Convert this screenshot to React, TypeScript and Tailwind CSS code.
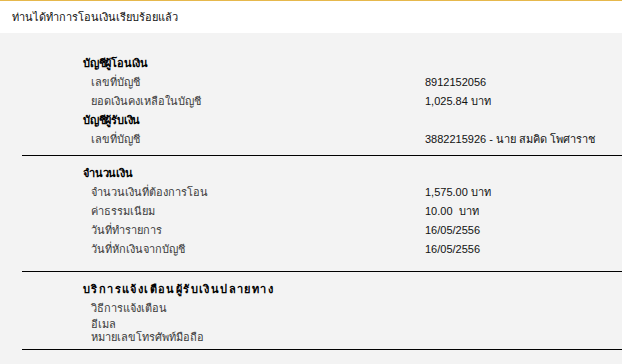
import React from "react";

const font = { fontFamily: '"Liberation Sans", "Noto Sans", Tahoma, sans-serif' };

function Row({ label, value }: { label: React.ReactNode; value?: React.ReactNode }) {
  return (
    <div className="grid grid-cols-[403px_1fr] h-[19px] leading-[19px]">
      <div className="pl-[69px] text-[#3a3a3a]">{label}</div>
      <div className="text-[#111]">{value}</div>
    </div>
  );
}

function Heading({ children, wide }: { children: React.ReactNode; wide?: boolean }) {
  return (
    <div
      className={
        wide
          ? "h-[19px] leading-[19px] pl-[61px] font-bold text-black tracking-[1.4px]"
          : "h-[19px] leading-[19px] pl-[61px] font-bold text-black tracking-[-0.2px]"
      }
    >
      {children}
    </div>
  );
}

export default function App() {
  return (
    <div className="w-[622px] h-[364px] bg-[#f3f3f3] text-[11px] overflow-hidden" style={font}>
      <div className="h-[33px] bg-white border-t border-[#e6b84c] flex items-center pl-[12px] text-[#111]">
        ท่านได้ทำการโอนเงินเรียบร้อยแล้ว
      </div>
      <div className="pl-[22px]">
        <div className="pt-[21px] pb-[6px] border-b border-black">
          <Heading>บัญชีผู้โอนเงิน</Heading>
          <Row label="เลขที่บัญชี" value="8912152056" />
          <Row label="ยอดเงินคงเหลือในบัญชี" value="1,025.84 บาท" />
          <Heading>บัญชีผู้รับเงิน</Heading>
          <Row label="เลขที่บัญชี" value="3882215926 - นาย สมคิด โพศาราช" />
        </div>
        <div className="pt-[8px] pb-[12px] border-b border-black">
          <Heading>จำนวนเงิน</Heading>
          <Row label="จำนวนเงินที่ต้องการโอน" value="1,575.00 บาท" />
          <Row label="ค่าธรรมเนียม" value={<span className="whitespace-pre">10.00  บาท</span>} />
          <Row label="วันที่ทำรายการ" value="16/05/2556" />
          <Row label="วันที่หักเงินจากบัญชี" value="16/05/2556" />
        </div>
        <div className="pt-[8px] pb-[5px] border-b border-black">
          <Heading wide>บริการแจ้งเตือนผู้รับเงินปลายทาง</Heading>
          <Row label="วิธีการแจ้งเตือน" />
          <div className="grid grid-cols-[403px_1fr] leading-[13px]">
            <div className="pl-[69px] text-[#3a3a3a]">
              <div>อีเมล</div>
              <div>หมายเลขโทรศัพท์มือถือ</div>
            </div>
            <div />
          </div>
        </div>
      </div>
    </div>
  );
}
